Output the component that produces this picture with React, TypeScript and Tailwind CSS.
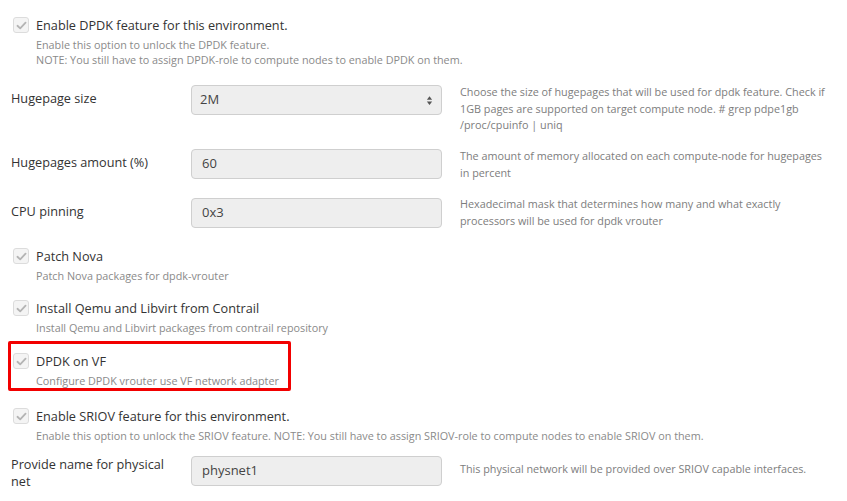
import React from "react";

function Check() {
  return (
    <span className="mt-[1px] flex h-[16px] w-[16px] shrink-0 items-center justify-center rounded-[3px] border border-[#dcdcdc] bg-[#f4f4f4]">
      <svg viewBox="0 0 16 16" className="h-[13px] w-[13px]">
        <path d="M3 8.3 L6.4 11.5 L13 4.5" fill="none" stroke="#b4b4b4" strokeWidth="2.2" strokeLinecap="round" strokeLinejoin="round" />
      </svg>
    </span>
  );
}

function CheckGroup({ label, desc, className = "" }: { label: string; desc: string[]; className?: string }) {
  return (
    <div className={`flex items-start gap-[7px] pl-[13px] ${className}`}>
      <Check />
      <div>
        <div className="text-[12.7px] leading-[18px] text-[#333]">{label}</div>
        <div className="mt-[3px] text-[10.8px] leading-[15px] text-[#8a8a8a]">
          {desc.map((d) => (
            <div key={d}>{d}</div>
          ))}
        </div>
      </div>
    </div>
  );
}

function FieldRow({
  label,
  value,
  help,
  select = false,
  labelClass = "pt-[4px] leading-[18px]",
  helpClass = "-mt-[1px]",
  className = "",
}: {
  label: string;
  value: string;
  help: string;
  select?: boolean;
  labelClass?: string;
  helpClass?: string;
  className?: string;
}) {
  return (
    <div className={`flex items-start pl-[11px] ${className}`}>
      <div className={`w-[165px] shrink-0 text-[12.7px] text-[#333] ${labelClass}`}>{label}</div>
      <div className="ml-[15px] flex h-[30px] w-[251px] shrink-0 items-center justify-between rounded-[4px] border border-[#cfcfcf] bg-[#eeeeee] pl-[8px] pr-[8px] text-[13px] text-[#444]">
        <span className={select ? "" : "pl-[2px]"}>{value}</span>
        {select && (
          <svg viewBox="0 0 8 12" className="h-[11px] w-[7px]">
            <path d="M4 1 L7 5 L1 5 Z M1 7 L7 7 L4 11 Z" fill="#555" />
          </svg>
        )}
      </div>
      <div className={`ml-[18px] w-[368px] text-[10.8px] leading-[16.5px] text-[#7d7d7d] ${helpClass}`}>{help}</div>
    </div>
  );
}

export default function App() {
  return (
    <div className="h-[501px] w-[847px] overflow-hidden bg-white pt-[16px] font-['Open_Sans',sans-serif]">
      <CheckGroup
        label="Enable DPDK feature for this environment."
        desc={[
          "Enable this option to unlock the DPDK feature.",
          "NOTE: You still have to assign DPDK-role to compute nodes to enable DPDK on them.",
        ]}
      />

      <div className="mt-[18px] h-[64px]">
        <FieldRow
          label="Hugepage size"
          value="2M"
          select
          help="Choose the size of hugepages that will be used for dpdk feature. Check if 1GB pages are supported on target compute node. # grep pdpe1gb /proc/cpuinfo | uniq"
        />
      </div>
      <div className="h-[49px]">
        <FieldRow
          label="Hugepages amount (%)"
          value="60"
          help="The amount of memory allocated on each compute-node for hugepages in percent"
        />
      </div>
      <div className="h-[49px]">
        <FieldRow
          label="CPU pinning"
          value="0x3"
          helpClass="-mt-[2px]"
          help="Hexadecimal mask that determines how many and what exactly processors will be used for dpdk vrouter"
        />
      </div>

      <CheckGroup label="Patch Nova" desc={["Patch Nova packages for dpdk-vrouter"]} />
      <CheckGroup
        className="mt-[16px]"
        label="Install Qemu and Libvirt from Contrail"
        desc={["Install Qemu and Libvirt packages from contrail repository"]}
      />
      <div className="relative mt-[17px]">
        <CheckGroup label="DPDK on VF" desc={["Configure DPDK vrouter use VF network adapter"]} />
        <div className="pointer-events-none absolute left-[8px] top-[-11px] h-[50px] w-[283px] rounded-[2px] border-[3px] border-[#f20000]" />
      </div>
      <CheckGroup
        className="mt-[19px]"
        label="Enable SRIOV feature for this environment."
        desc={[
          "Enable this option to unlock the SRIOV feature. NOTE: You still have to assign SRIOV-role to compute nodes to enable SRIOV on them.",
        ]}
      />
      <FieldRow
        className="mt-[13px]"
        label="Provide name for physical net"
        value="physnet1"
        labelClass="leading-[17px]"
        helpClass="pt-[5px]"
        help="This physical network will be provided over SRIOV capable interfaces."
      />
    </div>
  );
}
